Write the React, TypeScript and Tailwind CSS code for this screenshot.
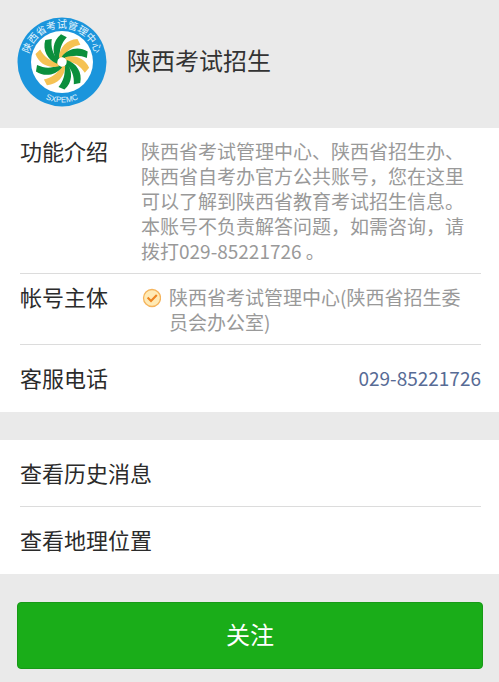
import type { ReactNode } from 'react';

const BLADES = [
  { angle: 0, color: '#0b8f3c' },
  { angle: 36, color: '#f5c253' },
  { angle: 70, color: '#0b8f3c' },
  { angle: 104, color: '#f5c253' },
  { angle: 141, color: '#0b8f3c' },
  { angle: 177, color: '#0b8f3c' },
  { angle: 215, color: '#f5c253' },
  { angle: 252, color: '#0b8f3c' },
  { angle: 289, color: '#f5c253' },
  { angle: 325, color: '#0b8f3c' },
];

function Emblem() {
  return (
    <svg viewBox="0 0 90 90" className="size-[90px] shrink-0" role="img" aria-label="陕西省考试管理中心">
      <circle cx="45" cy="45" r="44.5" fill="#1b95dc" />
      <circle cx="45" cy="45" r="31" fill="#fff" />
      {BLADES.map((b) => (
        <path
          key={b.angle}
          d="M44 17.3L49.8 20.3C44.5 26 42 33 43 40.5L40 43.5C34.5 35 35.5 24 44 17.3Z"
          fill={b.color}
          transform={`rotate(${b.angle} 45 45)`}
        />
      ))}
      <defs>
        <path id="arc-top" d="M11 45A34 34 0 0 1 79 45" />
        <path id="arc-bottom" d="M4.5 45A40.5 40.5 0 0 0 85.5 45" />
      </defs>
      <g fill="#e3f4fd" textAnchor="middle">
        <text fontSize="10" fontFamily="'Noto Sans CJK SC', sans-serif">
          <textPath href="#arc-top" startOffset="50%">陕西省考试管理中心</textPath>
        </text>
        <text fontSize="8" fontFamily="'Liberation Sans', sans-serif">
          <textPath href="#arc-bottom" startOffset="50%">SXPEMC</textPath>
        </text>
      </g>
    </svg>
  );
}

function VerifiedIcon() {
  return (
    <svg viewBox="0 0 20 20" className="mt-1 size-5 shrink-0" fill="none" aria-hidden="true">
      <circle cx="11" cy="10" r="8.5" fill="#ffeab5" stroke="#f5b45c" strokeWidth="1.3" />
      <path d="M6.6 9.6L10 13L15.8 7" stroke="#ee8420" strokeWidth="2.1" />
    </svg>
  );
}

function Row({ label, children }: { label: string; children: ReactNode }) {
  return (
    <div className="flex border-b border-[#dcdcdc] py-2.5">
      <dt className="w-[121px] shrink-0 text-[22px] leading-[25px] text-[#2b2b2b]">{label}</dt>
      <dd className="min-w-0 flex-1 text-[19px] leading-[25px] text-[#999]">{children}</dd>
    </div>
  );
}

export default function App() {
  return (
    <main className="min-h-screen bg-[#eaeaea] font-['Noto_Sans_CJK_SC',sans-serif]">
      <header className="flex h-32 items-center gap-5 pr-4 pb-1 pl-[17px]">
        <Emblem />
        <h1 className="pb-1 text-[24px] leading-8 text-[#333]">陕西考试招生</h1>
      </header>

      <dl className="bg-white pr-[18px] pl-5">
        <Row label="功能介绍">
          陕西省考试管理中心、陕西省招生办、陕西省自考办官方公共账号，您在这里可以了解到陕西省教育考试招生信息。本账号不负责解答问题，如需咨询，请拨打029-85221726 。
        </Row>
        <Row label="帐号主体">
          <div className="flex gap-2 pr-3">
            <VerifiedIcon />
            <span>陕西省考试管理中心(陕西省招生委员会办公室)</span>
          </div>
        </Row>
        <div className="flex h-[67px] items-center justify-between pb-0.5">
          <dt className="text-[22px] leading-[25px] text-[#2b2b2b]">客服电话</dt>
          <dd className="text-[19px] leading-[25px] text-[#576b95]">
            <a href="tel:029-85221726">029-85221726</a>
          </dd>
        </div>
      </dl>

      <nav className="mt-7 bg-white pr-[18px] pl-5 text-[22px] leading-[25px] text-[#2b2b2b]">
        <a href="#history" className="flex h-[67px] items-center border-b border-[#dcdcdc] pb-0.5">
          查看历史消息
        </a>
        <a href="#location" className="flex h-[67px] items-center pb-0.5">
          查看地理位置
        </a>
      </nav>

      <div className="pt-7 pr-4 pb-3 pl-[17px]">
        <button
          type="button"
          className="h-[67px] w-full rounded border border-[#179a17] bg-[#1aad19] pb-1 text-[24px] leading-8 text-white"
        >
          关注
        </button>
      </div>
    </main>
  );
}
